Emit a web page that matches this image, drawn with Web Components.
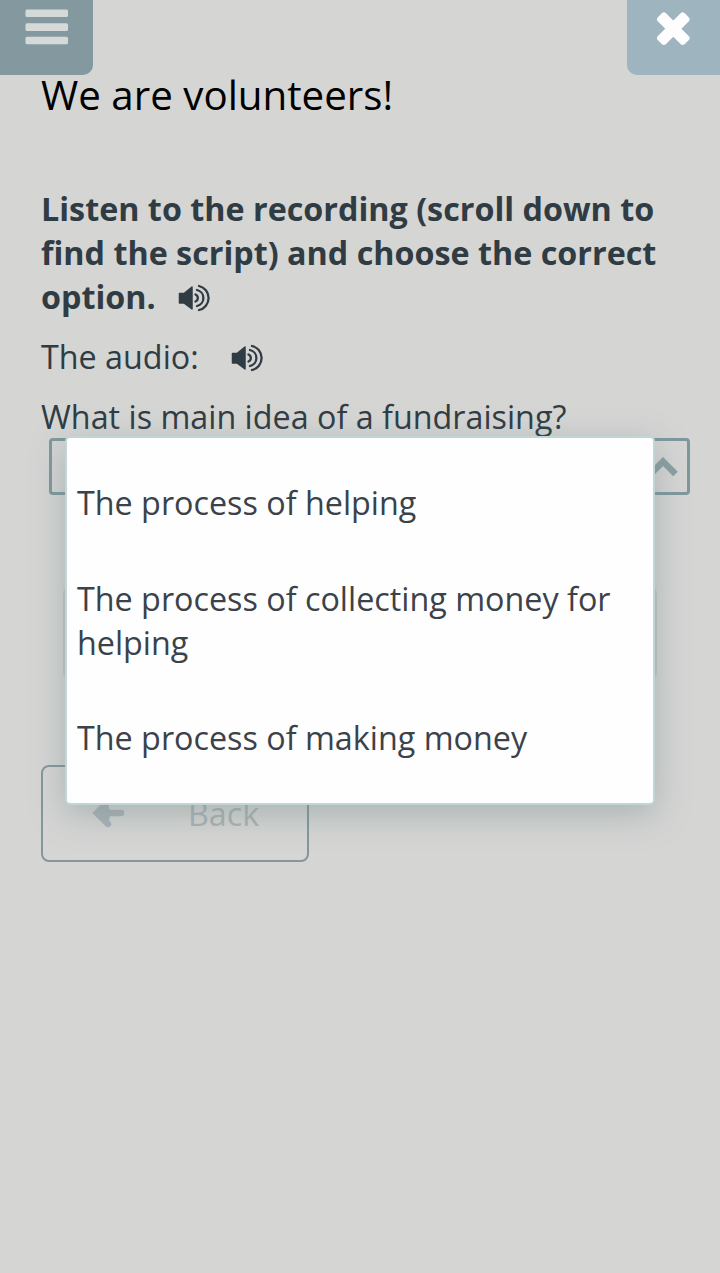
<!DOCTYPE html>
<html lang="en">
<head>
<meta charset="utf-8">
<title>We are volunteers!</title>
<style>
    body {
        margin: 0;
        min-height: 1273px;
        background: #d5d5d4;
        color: #303c43;
        font: 32.3px/44px "Open Sans", "Noto Sans", sans-serif;
        overflow: hidden;
    }
</style>
</head>
<body>
<lesson-page>
    <corner-button slot="menu" kind="menu"></corner-button>
    <corner-button slot="close" kind="close"></corner-button>
    <span slot="title">We are volunteers!</span>
    <lesson-line strong>Listen to the recording (scroll down to find the script) and choose the correct option.<speaker-icon></speaker-icon></lesson-line>
    <lesson-line audio>The audio:<speaker-icon></speaker-icon></lesson-line>
    <lesson-line>What is main idea of a fundraising?</lesson-line>
    <answer-select>
        <answer-option>The process of helping</answer-option>
        <answer-option>The process of collecting money for helping</answer-option>
        <answer-option>The process of making money</answer-option>
    </answer-select>
    <check-button></check-button>
    <back-button>Back</back-button>
</lesson-page>

<script>
function attach(element, html) {
    const template = document.createElement('template');
    template.innerHTML = html;
    element.attachShadow({ mode: 'open' }).appendChild(template.content.cloneNode(true));
}

class LessonPage extends HTMLElement {
    constructor() {
        super();
        attach(this, `
            <style>
                :host { display: block; }
                header { display: flex; justify-content: space-between; height: 75px; }
                main { padding: 0 30px 0 41px; }
                h1 {
                    margin: -9px 0 63px;
                    color: #000;
                    font-size: 40.3px;
                    font-weight: 400;
                    line-height: 57px;
                }
                .content { display: flex; flex-direction: column; align-items: flex-start; }
            </style>
            <header><slot name="menu"></slot><slot name="close"></slot></header>
            <main>
                <h1><slot name="title"></slot></h1>
                <div class="content"><slot></slot></div>
            </main>
        `);
    }
}

class CornerButton extends HTMLElement {
    constructor() {
        super();
        attach(this, `
            <style>
                :host {
                    display: block;
                    width: 93px;
                    height: 75px;
                    background: #84989f;
                    border-radius: 0 0 10px 0;
                }
                :host([kind="close"]) {
                    background: #9eb4bf;
                    border-radius: 0 0 0 10px;
                }
                svg { display: block; }
            </style>
            <svg width="93" height="75" viewBox="0 0 93 75"></svg>
        `);
    }

    connectedCallback() {
        const svg = this.shadowRoot.querySelector('svg');
        if (this.getAttribute('kind') === 'close') {
            svg.innerHTML = '<g transform="rotate(45 46.3 28.7)" fill="#fefefe"><rect x="27.3" y="23" width="38" height="11.4" rx="3"/><rect x="40.6" y="9.7" width="11.4" height="38" rx="3"/></g>';
        } else {
            svg.innerHTML = '<g fill="#d5dad9"><rect x="25.5" y="9.5" width="42.5" height="7.5" rx="1.5"/><rect x="25.5" y="23.3" width="42.5" height="7.7" rx="1.5"/><rect x="25.5" y="36.8" width="42.5" height="7.5" rx="1.5"/></g>';
        }
    }
}

class LessonLine extends HTMLElement {
    constructor() {
        super();
        attach(this, `
            <style>
                :host { display: block; margin-bottom: 16px; --icon-gap: 22px; }
                :host([strong]) { font-weight: 700; }
                :host([audio]) { --icon-gap: 32px; }
                :host(:last-of-type) { margin-bottom: 0; }
            </style>
            <slot></slot>
        `);
    }
}

class SpeakerIcon extends HTMLElement {
    constructor() {
        super();
        attach(this, `
            <style>
                :host { display: inline-block; margin-left: var(--icon-gap); line-height: 0; }
                svg { display: block; margin-bottom: -3px; }
            </style>
            <svg width="32" height="28" viewBox="0 0 32 28" fill="none" stroke="#303c43">
                <path d="M1.5 9.5H6L14 3v22l-8-6H1.5z" fill="#303c43" stroke-width="1.5" stroke-linejoin="round"/>
                <path d="M17.5 10.5a3.8 3.8 0 0 1 0 7M19 6a8.2 8.2 0 0 1 0 16M21 2a12.3 12.3 0 0 1 0 24" stroke-width="2.3" stroke-linecap="round"/>
            </svg>
        `);
    }
}

class AnswerSelect extends HTMLElement {
    constructor() {
        super();
        attach(this, `
            <style>
                :host { display: block; position: relative; width: 641px; margin-left: 8px; }
                .field {
                    display: flex;
                    align-items: center;
                    justify-content: flex-end;
                    box-sizing: border-box;
                    height: 57px;
                    padding-right: 9px;
                    border: 3px solid #7f989d;
                    border-radius: 4px;
                }
                .list {
                    position: absolute;
                    z-index: 1;
                    top: -2px;
                    left: 16px;
                    box-sizing: border-box;
                    width: 590px;
                    padding: 16px 10px 18.5px;
                    border: 2px solid #c1d5d6;
                    border-radius: 5px;
                    background: #fefefe;
                    box-shadow: 0 9px 34px rgba(105, 130, 127, .42);
                }
            </style>
            <div class="field">
                <svg width="28" height="22" viewBox="0 0 28 22" fill="none">
                    <path d="M.5 18 13 5.500 25.500 18" stroke="#8b9fa3" stroke-width="6.5"/>
                </svg>
            </div>
            <div class="list"><slot></slot></div>
        `);
    }
}

class AnswerOption extends HTMLElement {
    constructor() {
        super();
        attach(this, `
            <style>
                :host { display: block; padding: 26px 0 25.6px; color: #3b4249; }
            </style>
            <slot></slot>
        `);
    }
}

// disabled button, only its sides show past the open list
class CheckButton extends HTMLElement {
    constructor() {
        super();
        attach(this, `
            <style>
                :host {
                    display: block;
                    box-sizing: border-box;
                    width: 594px;
                    height: 94px;
                    margin: 91px 0 85px 22px;
                    border: 2px solid #c0c6c6;
                    border-radius: 8px;
                }
            </style>
        `);
    }
}

class BackButton extends HTMLElement {
    constructor() {
        super();
        attach(this, `
            <style>
                :host {
                    display: flex;
                    align-items: center;
                    box-sizing: border-box;
                    width: 268px;
                    height: 97px;
                    padding: 0 0 1px 49px;
                    border: 2px solid #84979c;
                    border-radius: 8px;
                    color: #abb2b5;
                }
                svg { margin-right: 63px; }
            </style>
            <svg width="33" height="30" viewBox="0 0 33 30" fill="none" stroke="#abb2b9" stroke-width="6.5" stroke-linecap="round">
                <path d="M29 15H8M16 4 5 15l11 11"/>
                <path d="M1 15 15 3l3 10v5l-2 8z" fill="#abb2b9" stroke="none"/>
            </svg>
            <slot></slot>
        `);
    }
}

customElements.define('lesson-page', LessonPage);
customElements.define('corner-button', CornerButton);
customElements.define('lesson-line', LessonLine);
customElements.define('speaker-icon', SpeakerIcon);
customElements.define('answer-select', AnswerSelect);
customElements.define('answer-option', AnswerOption);
customElements.define('check-button', CheckButton);
customElements.define('back-button', BackButton);
</script>
</body>
</html>
